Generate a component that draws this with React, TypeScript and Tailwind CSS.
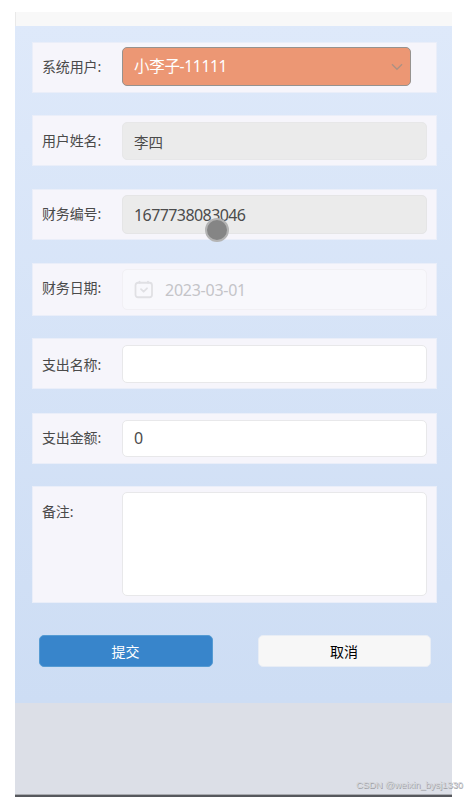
import { useState } from 'react'
import type { ReactNode } from 'react'

interface RowProps {
  label: string;
  className: string;
  labelClass?: string;
  children: ReactNode;
}

const fieldBase = 'w-[305px] rounded-[5px] border px-[11px] outline-none'

function Row({ label, className, labelClass = '', children }: RowProps) {
  return (
    <div className={`flex items-start border border-[#eaeef9] bg-[#f6f5fb] pl-[9px] ${className}`}>
      <label className={`w-20 shrink-0 whitespace-nowrap text-[14px] leading-5 tracking-[-0.15px] text-[#4a4a4a] ${labelClass}`}>{label}</label>
      {children}
    </div>
  )
}

function CalendarIcon() {
  return (
    <svg width="20" height="20" viewBox="0 0 20 20" fill="none" stroke="#e0e0e4" strokeWidth="1.8" strokeLinecap="round" strokeLinejoin="round">
      <rect x="1.5" y="2.75" width="16.5" height="14.5" rx="2.5" />
      <path d="M5.5 1.6v1.2M14 1.6v1.2" />
      <path d="M7 9.2l2.6 2.5 3.4-3.4" />
    </svg>
  )
}

export default function App() {
  const [nombre, setNombre] = useState('')
  const [monto, setMonto] = useState('0')
  const [nota, setNota] = useState('')

  return (
    <div className="relative h-[797px] w-[467px] overflow-hidden bg-white pl-[15px] pt-3 font-['Noto_Sans','Noto_Sans_CJK_SC',sans-serif]">
      <div className="flex h-[785px] w-[437px] flex-col bg-[#dcdfe7]">
        <div className="h-[14px] shrink-0 border-l border-[#e9e9e9] bg-[#f8f8f8]" />

        <form className="flex h-[677px] shrink-0 flex-col bg-linear-to-b from-[#dee9fa] to-[#cdddf4] pl-[17px] pt-4" onSubmit={(e) => e.preventDefault()}>
          <Row label="系统用户:" className="h-[51px] w-[405px] pt-[4px]" labelClass="mt-[10px]">
            <div className="flex h-[39px] w-[289px] items-center justify-between rounded-[5px] border border-[#96928f] bg-[#ec9774] pl-[11px] pr-[7px] text-[15.5px] tracking-[-0.3px] text-white">
              <span>小李子-11111</span>
              <svg width="12" height="8" viewBox="0 0 12 8" fill="none" stroke="#ac9183" strokeWidth="1.4">
                <path d="M1 1.2l5 5 5-5" />
              </svg>
            </div>
          </Row>

          <Row label="用户姓名:" className="mt-[22px] h-[51px] w-[405px] pt-[6px]" labelClass="mt-[9px]">
            <input readOnly value="李四" className={`${fieldBase} h-[38px] border-[#e7e7e8] bg-[#ebebeb] text-[14.5px] text-[#4c4c4c]`} />
          </Row>

          <Row label="财务编号:" className="mt-[23px] h-[51px] w-[405px] pt-[5px]" labelClass="mt-[9px]">
            <input readOnly value="1677738083046" className={`${fieldBase} h-[39px] border-[#e5e5e6] bg-[#ebebeb] pt-px text-[16px] tracking-[-0.58px] text-[#4c4c4c]`} />
          </Row>

          <Row label="财务日期:" className="mt-[23px] h-[53px] w-[405px] pt-[5px]" labelClass="mt-[9px]">
            <div className={`${fieldBase} flex h-[41px] items-center gap-[11px] border-[#f1f0f4] bg-[#f8f8fc] text-[16px] tracking-[-0.25px] text-[#c4c4c8]`}>
              <CalendarIcon />
              <span>2023-03-01</span>
            </div>
          </Row>

          <Row label="支出名称:" className="mt-[22px] h-[51px] w-[405px] pt-[6px]" labelClass="mt-[10px]">
            <input value={nombre} onChange={(e) => setNombre(e.target.value)} className={`${fieldBase} h-[38px] border-[#e8e8ea] bg-white text-[#444]`} />
          </Row>

          <Row label="支出金额:" className="mt-6 h-[51px] w-[405px] pt-[6px]" labelClass="mt-[8px]">
            <input value={monto} onChange={(e) => setMonto(e.target.value)} className={`${fieldBase} h-[37px] border-[#e8e8ea] bg-white pb-0.5 text-[16px] tracking-[-0.58px] text-[#4c4c4c]`} />
          </Row>

          <Row label="备注:" className="mt-[22px] h-[117px] w-[405px] pt-[5px]" labelClass="mt-[10px]">
            <textarea value={nota} onChange={(e) => setNota(e.target.value)} className={`${fieldBase} h-[104px] resize-none border-[#e8e8ea] bg-white text-[#444]`} />
          </Row>

          <div className="mt-8 flex gap-[45px] pl-[6.5px] text-[14px]">
            <button type="submit" className="h-8 w-[174px] rounded-[5px] border border-[#559bd3] bg-[#3885cb] pt-px leading-none text-white">提交</button>
            <button type="button" className="h-8 w-[173px] rounded-[5px] border border-[#e8edf5] bg-[#f7f7f7] pt-px leading-none text-black">取消</button>
          </div>
        </form>

        <div className="mt-auto h-[3px] border-t border-[#a9abb0] bg-[#56585d]" />
      </div>

      {/* puntero táctil */}
      <span className="absolute left-[205px] top-[218px] size-6 rounded-full border-2 border-[#b4b4b4] bg-[#858585]" />
      <span className="absolute left-[356px] top-[777px] whitespace-nowrap font-['Liberation_Sans',sans-serif] text-[9.5px] leading-4 tracking-[-0.1px] text-[#d3d4d7] [text-shadow:0.7px_0.7px_0_#a0a1a6]">CSDN @weixin_bysj1330</span>
    </div>
  )
}
